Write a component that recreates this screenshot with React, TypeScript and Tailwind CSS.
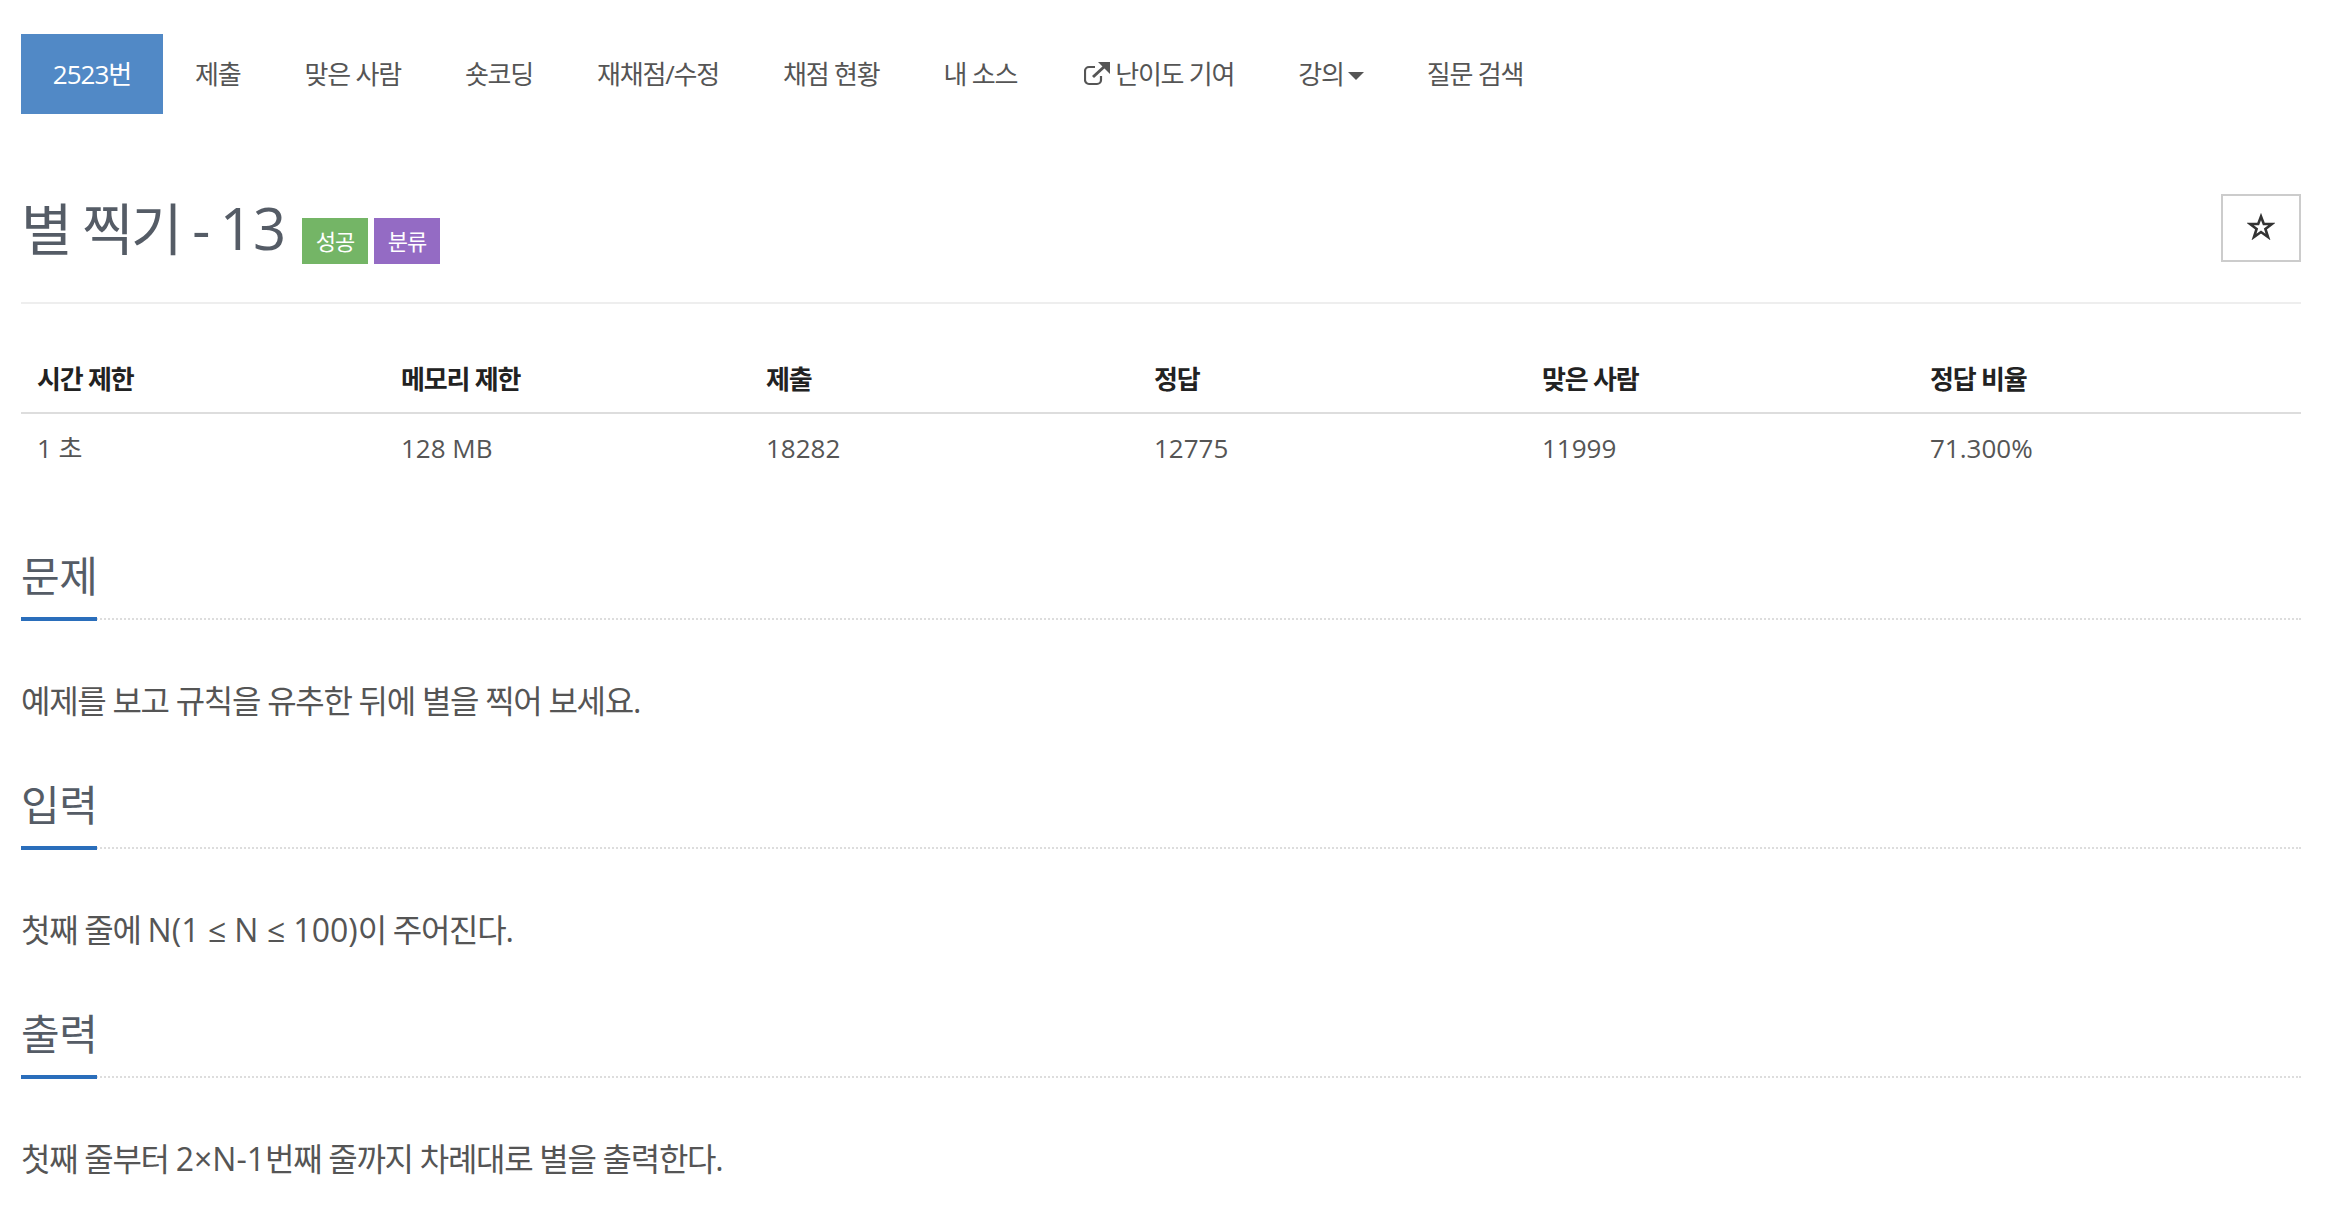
const KR = "font-['Open_Sans','Noto_Sans_CJK_KR',sans-serif]";

const nav = ["제출", "맞은 사람", "숏코딩", "재채점/수정", "채점 현황", "내 소스"];

function ExternalIcon() {
  return (
    <svg width="26" height="24" viewBox="0 0 26 24" className="mr-[5px] shrink-0" fill="none" stroke="currentColor">
      <path strokeWidth="2.2" d="M17 14v4a4 4 0 0 1-4 4H5a4 4 0 0 1-4-4V9a4 4 0 0 1 4-4h6" />
      <path strokeWidth="3" d="M9 15 21 4" />
      <path fill="currentColor" stroke="none" d="M14 0h12v12z" />
    </svg>
  );
}

function Star() {
  return (
    <svg width="28" height="27" viewBox="0 0 28 27" fill="none" stroke="#333" strokeWidth="2.6" strokeLinejoin="miter" className="-mt-[3px]">
      <path d="M14 3.5 16.8 11H25l-6.6 5 2.6 8L14 19l-7 5 2.6-8L3 11h8.2z" />
    </svg>
  );
}

function Latin({ children }: { children: string }) {
  return <span className="tracking-normal">{children}</span>;
}

function Section({ title, children }: { title: string; children: React.ReactNode }) {
  return (
    <section className="h-[229px]">
      <div className="h-[74px] border-b-2 border-dotted border-[#ddd]">
        <h2 className="inline-block h-[75px] border-b-4 border-[#2a6ebb] text-[42px] leading-[60px] tracking-[-0.5px] text-[#555c66]">{title}</h2>
      </div>
      <p className="mt-[57px] text-[32px] leading-[48px] tracking-[-1.3px] text-[#555]">{children}</p>
    </section>
  );
}

export default function App() {
  return (
    <div className={`${KR} min-h-[1212px] overflow-hidden bg-white pl-[21px] pr-[35px] pt-[34px]`}>
      <nav className="flex h-[80px] items-center text-[26px] tracking-[-1.2px] text-[#555]">
        <a className="flex h-[80px] w-[142px] items-center justify-center bg-[#5189c6] tracking-[-1px] text-white">2523번</a>
        {nav.map((n) => <a key={n} className="px-8">{n}</a>)}
        <a className="ml-[3px] flex items-center px-8"><ExternalIcon />난이도 기여</a>
        <a className="flex items-center px-8">강의<span className="ml-[4px] mt-1 h-0 w-0 border-x-[8px] border-t-[8px] border-x-transparent border-t-[#555]" /></a>
        <a className="-ml-[1px] px-8">질문 검색</a>
      </nav>

      <header className="mt-[80px] flex h-[110px] items-start justify-between border-b-2 border-[#eee]">
        <div className="flex items-start">
          <h1 className="text-[56px] leading-[68px] tracking-[-2.5px] text-[#555c66]">별 찍기 - <span className="text-[58px] tracking-normal">13</span></h1>
          <span className="ml-[16px] mt-[24px] flex h-[46px] w-[66px] items-center justify-center bg-[#74b566] text-[22px] tracking-[-1px] text-white">성공</span>
          <span className="ml-[6px] mt-[24px] flex h-[46px] w-[66px] items-center justify-center bg-[#946bc4] text-[22px] tracking-[-1px] text-white">분류</span>
        </div>
        <button className="flex h-[68px] w-[80px] items-center justify-center border-2 border-[#ccc]"><Star /></button>
      </header>

      <table className="mt-[27px] w-full table-fixed text-left text-[26px] text-[#555]">
        <thead>
          <tr className="h-[82px] border-b-2 border-[#ddd] tracking-[-1.2px] text-[#222]">
            <th className="w-[380px] pl-4 pt-4 font-bold">시간 제한</th>
            <th className="w-[365px] pt-4 font-bold">메모리 제한</th>
            <th className="w-[388px] pt-4 font-bold">제출</th>
            <th className="w-[388px] pt-4 font-bold">정답</th>
            <th className="w-[388px] pt-4 font-bold">맞은 사람</th>
            <th className="pt-4 font-bold">정답 비율</th>
          </tr>
        </thead>
        <tbody>
          <tr className="h-[70px]">
            <td className="pl-4">1 초</td>
            <td>128 MB</td>
            <td>18282</td>
            <td>12775</td>
            <td>11999</td>
            <td>71.300%</td>
          </tr>
        </tbody>
      </table>

      <div className="mt-[63px]">
        <Section title="문제">예제를 보고 규칙을 유추한 뒤에 별을 찍어 보세요.</Section>
        <Section title="입력">첫째 줄에 <Latin>N(1 ≤ N ≤ 100)</Latin>이 주어진다.</Section>
        <Section title="출력">첫째 줄부터 <Latin>2×N-1</Latin>번째 줄까지 차례대로 별을 출력한다.</Section>
      </div>
    </div>
  );
}
